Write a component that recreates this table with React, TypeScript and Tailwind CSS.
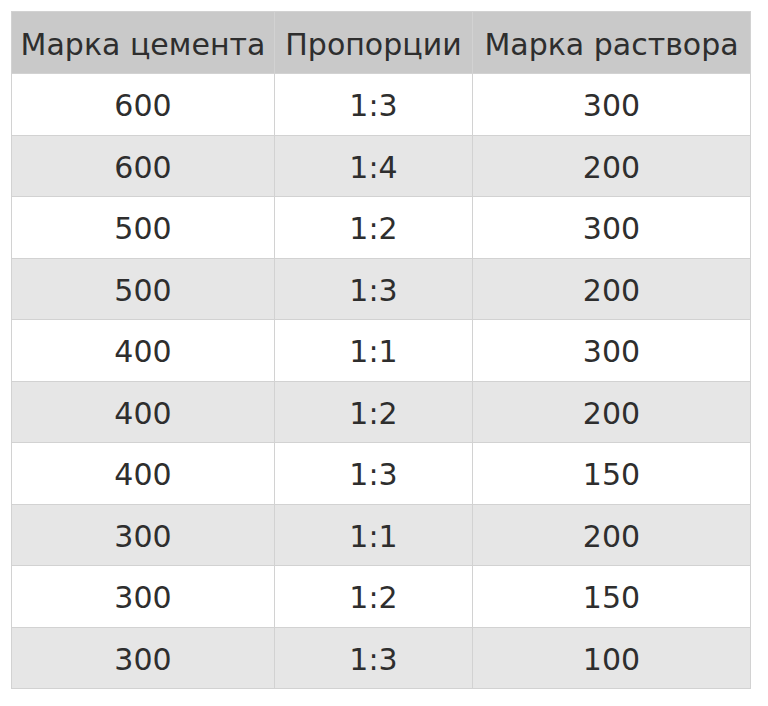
import React from "react";

const rows: [string, string, string][] = [
  ["600", "1:3", "300"],
  ["600", "1:4", "200"],
  ["500", "1:2", "300"],
  ["500", "1:3", "200"],
  ["400", "1:1", "300"],
  ["400", "1:2", "200"],
  ["400", "1:3", "150"],
  ["300", "1:1", "200"],
  ["300", "1:2", "150"],
  ["300", "1:3", "100"],
];

export default function App() {
  return (
    <div className="w-[768px] h-[706px] bg-white pt-[11px] pl-[11px]" style={{ fontFamily: '"DejaVu Sans", Verdana, sans-serif' }}>
      <table className="border-collapse text-[30px] text-[#2e2e2e]">
        <thead>
          <tr className="h-[62px] bg-[#c9c9c9]">
            <th className="w-[263px] font-normal text-center border border-[#d2d2d2] px-0 pt-[3px] pb-0">Марка цемента</th>
            <th className="w-[198px] font-normal text-center border border-[#d2d2d2] px-0 pt-[3px] pb-0">Пропорции</th>
            <th className="w-[278px] font-normal text-center border border-[#d2d2d2] px-0 pt-[3px] pb-0">Марка раствора</th>
          </tr>
        </thead>
        <tbody>
          {rows.map((r, i) => (
            <tr key={i} className={i % 2 === 0 ? "h-[61.5px] bg-white" : "h-[61.5px] bg-[#e6e6e6]"}>
              {r.map((c, j) => (
                <td key={j} className="text-center border border-[#d2d2d2] px-0 pt-[3px] pb-0">{c}</td>
              ))}
            </tr>
          ))}
        </tbody>
      </table>
    </div>
  );
}
